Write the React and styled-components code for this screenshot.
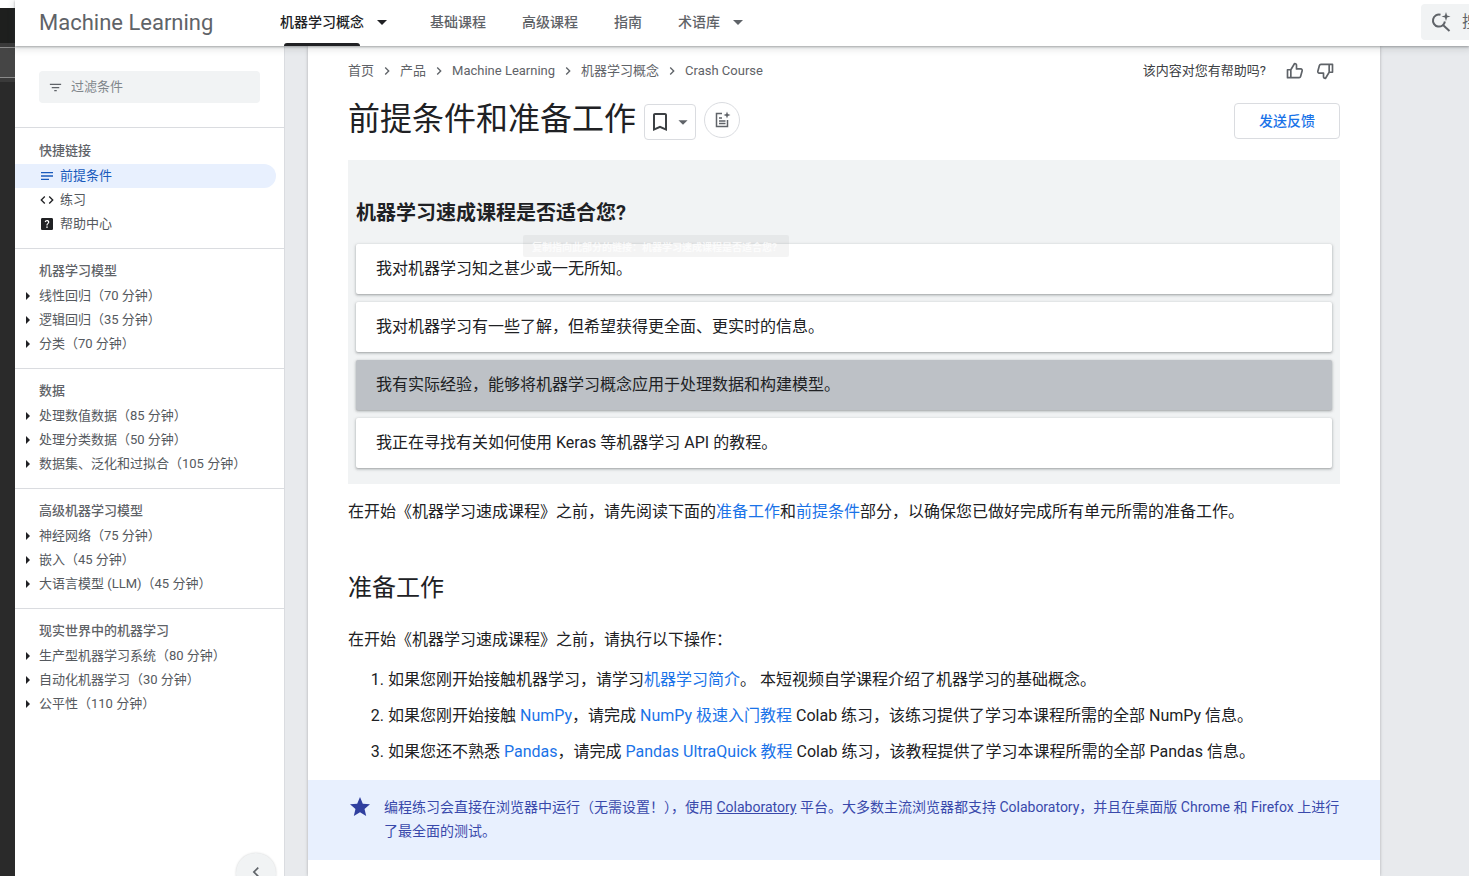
import React from 'react';
import styled, { createGlobalStyle } from 'styled-components';
import {
  MdBookmarkBorder, MdArrowDropDown,
  MdFilterList, MdNotes, MdCode, MdHelpCenter, MdStar, MdChevronRight, MdChevronLeft,
} from 'react-icons/md';

const Global = createGlobalStyle`
  html, body { margin: 0; padding: 0; background: #fff; overflow: hidden; }
  * { box-sizing: border-box; }
  body { font-family: Roboto, "Noto Sans CJK SC", sans-serif; color: #202124; }
`;

const Page = styled.div`display: flex; width: 1469px; height: 876px; overflow: hidden; background: #fff;`;

const Strip = styled.div`width: 15px; flex: none; display: flex; flex-direction: column; background: #2a2a2a;`;
const StripTop = styled.div`height: 8px; background: #fff;`;
const StripDark = styled.div`height: 35px; background: #1e1f1e;`;
const StripBand = styled.div`
  height: 39px; background: #454545;
  border-top: 4px solid #3a3a3a; border-bottom: 4px solid #3a3a3a;
  box-shadow: inset 0 1px 0 #8a8a8a, inset 0 -1px 0 #8a8a8a;
`;

const Shell = styled.div`flex: 1; min-width: 0; display: flex; flex-direction: column;`;

const Header = styled.header`
  height: 46px; flex: none; display: flex; align-items: center; background: #fff; position: relative; z-index: 3;
  padding-left: 24px;
  box-shadow: 0 1px 2px rgba(60,64,67,.4), 0 2px 6px 2px rgba(60,64,67,.12);
`;
const Logo = styled.div`width: 241px; flex: none; font-size: 22px; line-height: 28px; margin-top: -1px; color: #5f6368; white-space: nowrap;`;
const Nav = styled.nav`display: flex; align-items: center; height: 100%; flex: 1;`;
const Tab = styled.div`
  position: relative; height: 100%; display: flex; align-items: center; font-size: 14px; font-weight: 500; line-height: 20px;
  padding-bottom: 3px;
  color: ${p => (p.$active ? '#202124' : '#5f6368')};
  margin-right: ${p => p.$gap}px; white-space: nowrap;
  ${p => p.$active && `&::after { content: ''; position: absolute; left: 4px; width: 76px; bottom: 0; height: 3px; background: #202124; border-radius: 3px 3px 0 0; }`}
  svg { margin-left: 6px; }
`;
const Search = styled.div`
  width: 60px; height: 36px; margin-top: -2px; flex: none; background: #f1f3f4; border-radius: 4px 0 0 4px;
  display: flex; align-items: center; padding-left: 10px; gap: 11px; color: #5f6368; font-size: 16px; line-height: 24px;
  overflow: hidden; white-space: nowrap; margin-right: -12px;
`;

const Body = styled.div`flex: 1; min-height: 0; display: flex; background: #e8eaed;`;

const Sidebar = styled.aside`
  width: 270px; flex: none; background: #fff; position: relative; overflow: hidden;
  border-right: 1px solid #dadce0;
`;
const FilterWrap = styled.div`height: 81px; padding: 25px 24px 0 24px;`;
const Filter = styled.div`
  height: 32px; width: 221px; background: #f1f3f4; border-radius: 4px; display: flex; align-items: center;
  padding: 0 0 0 9px; gap: 8px; font-size: 13px; line-height: 20px; color: #80868b;
  svg { color: #5f6368; }
`;
const Section = styled.section`
  border-top: 1px solid #dadce0;
  padding: ${p => (p.$first ? '12px 0 12px' : '11px 0 12px')};
`;
const SectionTitle = styled.div`height: 24px; line-height: 22px; padding-left: 24px; font-size: 13px; font-weight: 500; color: #5f6368;`;
const QuickItem = styled.div`
  height: 24px; width: 261px; line-height: 22px; display: flex; align-items: center; font-size: 13px; padding-left: 24px; gap: 5px;
  color: ${p => (p.$active ? '#185abc' : '#55595e')};
  background: ${p => (p.$active ? '#e8f0fe' : 'transparent')};
  border-radius: 0 12px 12px 0;
  svg { color: ${p => (p.$active ? '#185abc' : '#202124')}; flex: none; }
`;
const NavItem = styled.div`height: 24px; line-height: 24px; display: flex; align-items: center; font-size: 13px; color: #55595e; white-space: nowrap;`;
const Arrow = styled.span`
  width: 0; height: 0; margin: 0 9px 0 11px; flex: none;
  border-left: 4px solid #202124; border-top: 4px solid transparent; border-bottom: 4px solid transparent;
`;
const Collapse = styled.button`
  position: absolute; left: 221px; top: 807px; width: 40px; height: 40px; border-radius: 50%; border: 0; padding: 0;
  background: #f1f3f4; display: flex; justify-content: center; padding-top: 9px; color: #5f6368;
  box-shadow: 0 0 2px rgba(60,64,67,.25);
`;

const Gutter = styled.div`width: 23px; flex: none;`;

const Main = styled.main`
  width: 1072px; flex: none; background: #fff; padding: 13px 40px 0; box-shadow: 0 0 3px rgba(60,64,67,.35);
  position: relative; z-index: 1; overflow: hidden;
`;
const TopRow = styled.div`display: flex; align-items: center; justify-content: space-between; height: 24px;`;
const Crumbs = styled.div`display: flex; align-items: center; font-size: 13px; line-height: 20px; color: #5f6368; white-space: nowrap;`;
const CrumbSep = styled.span`display: inline-flex; margin: 0 5px; color: #5f6368;`;
const Helpful = styled.div`display: flex; align-items: center; font-size: 13px; line-height: 20px; color: #3c4043; margin-right: 5px;`;
const Thumb = styled.svg`
  width: 20px; height: 20px; margin-left: ${p => p.$gap}px; fill: none; stroke: #5f6368; stroke-width: 2; stroke-linejoin: round;
  transform: ${p => (p.$down ? 'rotate(180deg)' : 'none')};
`;
const TitleRow = styled.div`display: flex; align-items: flex-start; margin-top: 16px; height: 40px;`;
const Title = styled.h1`margin: 0; font-size: 32px; font-weight: 400; line-height: 40px; color: #202124; white-space: nowrap;`;
const BookmarkBtn = styled.div`
  width: 52px; height: 36px; margin: 5px 0 0 8px; border: 1px solid #dadce0; border-radius: 4px; display: flex; align-items: center;
  padding-left: 3px; color: #5f6368; svg:first-child { color: #3c4043; }
`;
const SparkBtn = styled.div`
  width: 36px; height: 36px; margin: 3px 0 0 8px; border: 1px solid #dadce0; border-radius: 50%; display: flex; align-items: center; justify-content: center;
`;
const FeedbackBtn = styled.div`
  width: 106px; height: 36px; margin: 4px 0 0 auto; border: 1px solid #dadce0; border-radius: 4px; display: flex; align-items: center; justify-content: center;
  color: #1a73e8; font-size: 14px; line-height: 20px; font-weight: 500;
`;

const Quiz = styled.div`position: relative; margin-top: 21px; background: #f1f3f4; padding: 40px 8px 16px;`;
const QuizTitle = styled.h3`margin: 0 0 16px; font-size: 20px; line-height: 26px; padding-bottom: 2px; font-weight: 700; color: #202124;`;
const QuizList = styled.div`display: flex; flex-direction: column; gap: 8px;`;
const Choice = styled.div`
  height: 50px; display: flex; align-items: center; padding: 0 0 0 20px; font-size: 16px; line-height: 24px; border-radius: 2px; color: #202124;
  background: ${p => (p.$selected ? '#bdc1c6' : '#fff')};
  box-shadow: 0 1px 2px rgba(60,64,67,.3), 0 1px 3px 1px rgba(60,64,67,.15);
`;
const Tip = styled.div`
  position: absolute; left: 175px; top: 75px; width: 266px; height: 22px; padding-left: 9px; border-radius: 2px; z-index: 2;
  display: flex; align-items: center; white-space: nowrap;
  background: rgba(60,64,67,.06); color: rgba(255,255,255,.75); font-size: 10px; font-weight: 700;
`;

const Para = styled.p`margin: ${p => p.$top}px 0 0; font-size: 16px; line-height: 24px; color: #202124; white-space: nowrap;`;
const Link = styled.a`color: #1a73e8; text-decoration: none;`;
const H2 = styled.h2`margin: 48px 0 0; font-size: 24px; line-height: 32px; font-weight: 400; color: #202124;`;
const Steps = styled.ol`margin: 16px 0 0; padding: 0 0 0 40px; font-size: 16px; line-height: 24px; color: #202124;`;
const Step = styled.li`margin-top: 12px; white-space: nowrap; &:first-child { margin-top: 0; }`;
const Note = styled.div`
  margin: 16px -40px 0; padding: 15px 40px 17px; background: #e8f0fe; display: flex; gap: 12px; color: #3949ab;
  font-size: 14px; line-height: 24px; svg { flex: none; color: #303f9f; margin-top: 0; }
`;
const NoteLink = styled.a`color: #3949ab; text-decoration: underline;`;

const SparkDoc = () => (
  <svg width="20" height="20" viewBox="0 0 20 20" fill="none" stroke="#5f6368" strokeWidth="1.5">
    <path d="M10 3.5H4.5v13h11V10" />
    <path d="M7 8h3M7 11h6.5M7 13.5h6.5" />
    <path d="M15 1.5l.9 2.6 2.6.9-2.6.9-.9 2.6-.9-2.6-2.6-.9 2.6-.9z" fill="#5f6368" stroke="none" />
  </svg>
);
const SparkSearch = () => (
  <svg width="20" height="20" viewBox="0 0 20 20" fill="none" stroke="#5f6368" strokeWidth="2" style={{ flex: 'none' }}>
    <path d="M9.5 2.8A6 6 0 1 0 13.9 9.5" />
    <path d="M12 13l6.5 6" />
    <path d="M15 0l1.1 3.4 3.4 1.1-3.4 1.1-1.1 3.4-1.1-3.4-3.4-1.1 3.4-1.1z" fill="#5f6368" stroke="none" />
  </svg>
);
const thumbPath = 'M7 10.5V20H3V10.5zM7 10.5L11.5 3c1.3 0 2.3 1 2.3 2.3V9.5h5.2c1.1 0 1.9 1 1.6 2.1l-1.9 7c-.2.8-1 1.4-1.8 1.4H7';

const sections = [
  ['机器学习模型', ['线性回归（70 分钟）', '逻辑回归（35 分钟）', '分类（70 分钟）']],
  ['数据', ['处理数值数据（85 分钟）', '处理分类数据（50 分钟）', '数据集、泛化和过拟合（105 分钟）']],
  ['高级机器学习模型', ['神经网络（75 分钟）', '嵌入（45 分钟）', '大语言模型 (LLM)（45 分钟）']],
  ['现实世界中的机器学习', ['生产型机器学习系统（80 分钟）', '自动化机器学习（30 分钟）', '公平性（110 分钟）']],
];
const crumbs = ['首页', '产品', 'Machine Learning', '机器学习概念', 'Crash Course'];
const choices = [
  '我对机器学习知之甚少或一无所知。',
  '我对机器学习有一些了解，但希望获得更全面、更实时的信息。',
  '我有实际经验，能够将机器学习概念应用于处理数据和构建模型。',
  '我正在寻找有关如何使用 Keras 等机器学习 API 的教程。',
];

export default function App() {
  return (
    <Page>
      <Global />
      <Strip>
        <StripTop />
        <StripDark />
        <StripBand />
      </Strip>
      <Shell>
        <Header>
          <Logo>Machine Learning</Logo>
          <Nav>
            <Tab $active $gap={36}>机器学习概念<MdArrowDropDown size={24} color="#202124" /></Tab>
            <Tab $gap={36}>基础课程</Tab>
            <Tab $gap={36}>高级课程</Tab>
            <Tab $gap={36}>指南</Tab>
            <Tab $gap={0}>术语库<MdArrowDropDown size={24} color="#5f6368" /></Tab>
          </Nav>
          <Search><SparkSearch />搜索</Search>
        </Header>
        <Body>
          <Sidebar>
            <FilterWrap>
              <Filter><MdFilterList size={15} />过滤条件</Filter>
            </FilterWrap>
            <Section $first>
              <SectionTitle>快捷链接</SectionTitle>
              <QuickItem $active><MdNotes size={16} />前提条件</QuickItem>
              <QuickItem><MdCode size={16} />练习</QuickItem>
              <QuickItem><MdHelpCenter size={16} />帮助中心</QuickItem>
            </Section>
            {sections.map(([title, items]) => (
              <Section key={title}>
                <SectionTitle>{title}</SectionTitle>
                {items.map(item => (
                  <NavItem key={item}><Arrow />{item}</NavItem>
                ))}
              </Section>
            ))}
            <Collapse aria-label="收起"><MdChevronLeft size={20} /></Collapse>
          </Sidebar>
          <Gutter />
          <Main>
            <TopRow>
              <Crumbs>
                {crumbs.map((c, i) => (
                  <React.Fragment key={c}>
                    {i > 0 && <CrumbSep><MdChevronRight size={16} /></CrumbSep>}
                    {c}
                  </React.Fragment>
                ))}
              </Crumbs>
              <Helpful>
                该内容对您有帮助吗?
                <Thumb $gap={19} viewBox="0 0 24 24"><path d={thumbPath} /></Thumb>
                <Thumb $gap={10} $down viewBox="0 0 24 24"><path d={thumbPath} /></Thumb>
              </Helpful>
            </TopRow>
            <TitleRow>
              <Title>前提条件和准备工作</Title>
              <BookmarkBtn><MdBookmarkBorder size={24} /><MdArrowDropDown size={22} /></BookmarkBtn>
              <SparkBtn><SparkDoc /></SparkBtn>
              <FeedbackBtn>发送反馈</FeedbackBtn>
            </TitleRow>
            <Quiz>
              <QuizTitle>机器学习速成课程是否适合您?</QuizTitle>
              <Tip>复制指向此部分的链接：机器学习速成课程是否适合您?</Tip>
              <QuizList>
                {choices.map((c, i) => (
                  <Choice key={c} $selected={i === 2}>{c}</Choice>
                ))}
              </QuizList>
            </Quiz>
            <Para $top={16}>
              在开始《机器学习速成课程》之前，请先阅读下面的<Link>准备工作</Link>和<Link>前提条件</Link>部分，以确保您已做好完成所有单元所需的准备工作。
            </Para>
            <H2>准备工作</H2>
            <Para $top={24}>在开始《机器学习速成课程》之前，请执行以下操作：</Para>
            <Steps>
              <Step>如果您刚开始接触机器学习，请学习<Link>机器学习简介</Link>。 本短视频自学课程介绍了机器学习的基础概念。</Step>
              <Step>如果您刚开始接触 <Link>NumPy</Link>，请完成 <Link>NumPy 极速入门教程</Link> Colab 练习，该练习提供了学习本课程所需的全部 NumPy 信息。</Step>
              <Step>如果您还不熟悉 <Link>Pandas</Link>，请完成 <Link>Pandas UltraQuick 教程</Link> Colab 练习，该教程提供了学习本课程所需的全部 Pandas 信息。</Step>
            </Steps>
            <Note>
              <MdStar size={24} />
              <div>
                编程练习会直接在浏览器中运行（无需设置！），使用 <NoteLink>Colaboratory</NoteLink> 平台。大多数主流浏览器都支持 Colaboratory，并且在桌面版 Chrome 和 Firefox 上进行了最全面的测试。
              </div>
            </Note>
          </Main>
          <Gutter />
        </Body>
      </Shell>
    </Page>
  );
}
